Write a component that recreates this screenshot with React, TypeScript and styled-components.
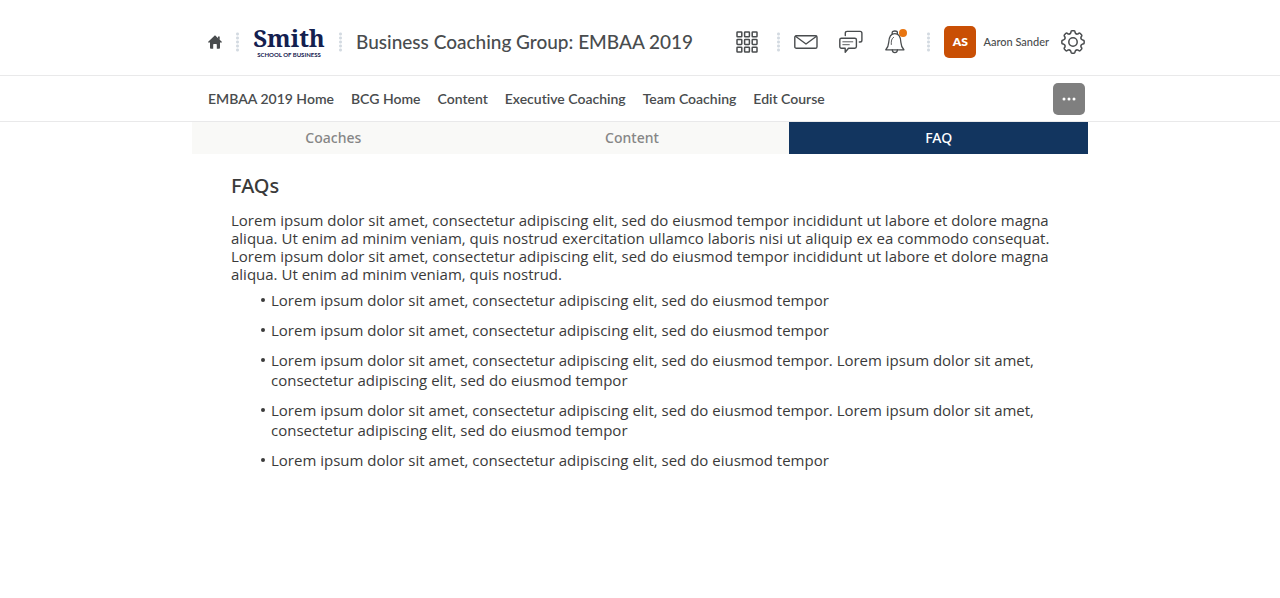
import React from 'react';
import styled, { createGlobalStyle } from 'styled-components';

const Global = createGlobalStyle`
  *, *::before, *::after { box-sizing: border-box; }
  body { margin: 0; background: #fff; color: #3a3a3a; font-family: 'Open Sans', sans-serif; }
  h1, h2, p, ul { margin: 0; padding: 0; }
  button { font: inherit; border: 0; padding: 0; background: none; color: inherit; cursor: pointer; }
  a { color: inherit; text-decoration: none; }
`;

const Band = styled.div`
  border-bottom: 1px solid #e9e9ea;
`;

const Inner = styled.div<{ $height: number; $top: number }>`
  width: 70%;
  min-height: ${(p) => p.$height}px;
  margin: 0 auto;
  padding: ${(p) => p.$top}px 3px 0 16px;
  display: flex;
  align-items: center;
  font-family: Lato, sans-serif;
  color: #494c4e;
`;

const HomeLink = styled.a`
  display: flex;
`;

const Divider = styled.span<{ $before?: number }>`
  width: 3px;
  height: 20px;
  flex: none;
  margin: 0 14px 0 ${(p) => p.$before ?? 14}px;
  background: radial-gradient(circle, #d3dae1 1px, transparent 2px) 0 0 / 3px 4px;
`;

const Logo = styled.a`
  display: flex;
  flex-direction: column;
  align-items: center;
  width: 72px;
  color: #14204f;
`;

const LogoName = styled.span`
  font: 700 24px/26px 'Noto Serif', 'DejaVu Serif Condensed', serif;
`;

const LogoSub = styled.span`
  font: 700 6px/8px Lato, sans-serif;
  white-space: nowrap;
`;

const CourseTitle = styled.a`
  flex: 1;
  font-size: 19px;
  line-height: 24px;
  font-weight: 500;
  white-space: nowrap;
`;

const Tools = styled.div`
  display: flex;
  align-items: center;
`;

const IconButton = styled.button<{ $gap?: number }>`
  position: relative;
  display: flex;
  margin-left: ${(p) => p.$gap ?? 0}px;
`;

const Badge = styled.span`
  position: absolute;
  top: -1px;
  right: -2px;
  width: 8px;
  height: 8px;
  border-radius: 50%;
  background: #e87511;
`;

const UserButton = styled.button`
  display: flex;
  align-items: center;
  gap: 7px;
  margin-right: 12px;
  font-size: 11px;
  font-weight: 500;
  white-space: nowrap;
`;

const Avatar = styled.span`
  display: grid;
  place-items: center;
  width: 32px;
  height: 32px;
  border-radius: 5px;
  background: #c94f04;
  color: #fff;
  font-size: 12px;
  font-weight: 800;
`;

const NavList = styled.nav`
  display: flex;
  flex: 1;
  gap: 17px;
  font-size: 14px;
  line-height: 20px;
  font-weight: 600;
  font-variant-ligatures: none;
  white-space: nowrap;
`;

const MoreButton = styled.button`
  display: grid;
  place-items: center;
  width: 32px;
  height: 32px;
  border-radius: 5px;
  background: #7f7f7f;
`;

const Page = styled.main`
  width: 70%;
  margin: 0 auto;
`;

const Tabs = styled.div`
  display: grid;
  grid-template-columns: repeat(3, 1fr);
`;

const Tab = styled.button<{ $active?: boolean }>`
  height: 32px;
  padding-right: ${(p) => (p.$active ? 0 : 16)}px;
  background: ${(p) => (p.$active ? '#12355f' : '#f9f9f7')};
  color: ${(p) => (p.$active ? '#fff' : '#868686')};
  font-family: 'Noto Sans', sans-serif;
  font-size: 14px;
  line-height: 18px;
  font-weight: 500;
`;

const Article = styled.section`
  padding: 20px 38px 20px 39px;
`;

const Heading = styled.h2`
  font-family: 'Noto Sans', sans-serif;
  font-size: 20px;
  line-height: 24px;
  font-weight: 500;
`;

const Intro = styled.p`
  margin-top: 13px;
  font-size: 15px;
  line-height: 18px;
`;

const List = styled.ul`
  display: grid;
  gap: 10px;
  margin-top: 7px;
  padding: 0 10px 0 40px;
  list-style: none;
  font-size: 15px;
  line-height: 20px;
`;

const Item = styled.li`
  position: relative;
  &::before {
    content: '';
    position: absolute;
    left: -10px;
    top: 8px;
    width: 4px;
    height: 4px;
    border-radius: 50%;
    background: currentColor;
  }
`;

const stroke = { fill: 'none', stroke: '#494c4e', strokeLinejoin: 'round', strokeLinecap: 'round' } as const;

const HomeIcon = () => (
  <svg width="14" height="14" viewBox="0 0 14 14" fill="#494c4e">
    <path d="M7 .3 13.8 6.8c.3.4.1.8-.4.8H12v5.2c0 .6-.3.9-.9.9H8.8V9.6c0-.5-.2-.7-.7-.7H5.9c-.5 0-.7.2-.7.7v4.1H2.9c-.6 0-.9-.3-.9-.9V7.6H.6c-.5 0-.7-.4-.4-.8z" />
    <path d="M10 1.500h1.700v3.500L10 3.500z" />
  </svg>
);

const GridIcon = () => (
  <svg width="22" height="22" viewBox="0 0 22 22" {...stroke} strokeWidth="1.500">
    {[1, 8.6, 16.2].map((y) =>
      [1, 8.6, 16.2].map((x) => <rect key={`${x}-${y}`} x={x} y={y} width="4.8" height="4.8" rx=".6" />),
    )}
  </svg>
);

const MailIcon = () => (
  <svg width="24" height="14" viewBox="0 0 24 14" {...stroke} strokeWidth="1.400">
    <rect x=".8" y=".7" width="22.2" height="12.6" rx="1.6" />
    <path d="M1.500 1.300 12 9l10.500-7.700" />
  </svg>
);

const ChatIcon = () => (
  <svg width="24" height="24" viewBox="0 0 24 24" {...stroke} strokeWidth="1.400">
    <path d="M6.300 5.500V3.200c0-1.200.6-1.800 1.800-1.800h13c1.200 0 1.800.6 1.800 1.800v7c0 1.200-.6 1.800-1.800 1.800h-.8" />
    <path d="M2.400 8.200h13.400c1 0 1.600.6 1.600 1.600v6.800c0 1-.6 1.600-1.600 1.600H9.500l-3.300 4v-4H2.400c-1 0-1.600-.6-1.600-1.600V9.800c0-1 .6-1.600 1.600-1.600z" />
    <path d="M3.800 11.800h10M3.800 14.700h6.500" strokeWidth=".9" />
  </svg>
);

const BellIcon = () => (
  <svg width="20" height="24" viewBox="0 0 20 24" {...stroke} strokeWidth="1.300">
    <path d="M.8 19.800c1.800-2 2.700-4 2.900-7.300C4 7.200 5.300 3.700 9.800 3.700s5.900 3.500 6.100 8.800c.2 3.300 1.100 5.300 3 7.300z" />
    <path d="M7.200 4V2.500c0-2 5.200-2 5.200 0V4M7.300 20c.3 3.500 4.800 3.500 5.100 0" />
    <path d="M6.300 14.500c-.2-3.500.2-6 2.300-7.200" strokeWidth=".9" />
  </svg>
);

const gearPath = (() => {
  const pts: string[] = [];
  for (let i = 0; i < 8; i++) {
    const a = (i * Math.PI) / 4;
    const p = (r: number, d: number) =>
      `${(12 + r * Math.sin(a + d)).toFixed(2)} ${(12 - r * Math.cos(a + d)).toFixed(2)}`;
    pts.push(
      `${i ? 'L' : 'M'}${p(9.6, -0.22)}Q${p(11.2, -0.2)} ${p(11.2, -0.1)}L${p(11.2, 0.1)}Q${p(11.2, 0.2)} ${p(9.6, 0.22)}Q${p(7.9, 0.392)} ${p(9.6, 0.565)}`,
    );
  }
  return `${pts.join('')}Z`;
})();

const GearIcon = () => (
  <svg width="24" height="24" viewBox="0 0 24 24" {...stroke} strokeWidth="1.500">
    <path d={gearPath} />
    <circle cx="12" cy="12" r="4.2" />
  </svg>
);

const DotsIcon = () => (
  <svg width="14" height="4" viewBox="0 0 14 4" fill="#fff">
    {[2, 7, 12].map((x) => (
      <circle key={x} cx={x} cy="2" r="1.5" />
    ))}
  </svg>
);

const links = ['EMBAA 2019 Home', 'BCG Home', 'Content', 'Executive Coaching', 'Team Coaching', 'Edit Course'];
const short = 'Lorem ipsum dolor sit amet, consectetur adipiscing elit, sed do eiusmod tempor';
const long = `${short}. Lorem ipsum dolor sit amet, consectetur adipiscing elit, sed do eiusmod tempor`;
const items = [short, short, long, long, short];

export default function App() {
  return (
    <>
      <Global />
      <header>
        <Band>
          <Inner $height={75} $top={8}>
            <HomeLink href="#" aria-label="Home"><HomeIcon /></HomeLink>
            <Divider />
            <Logo href="#">
              <LogoName>Smith</LogoName>
              <LogoSub>SCHOOL OF BUSINESS</LogoSub>
            </Logo>
            <Divider />
            <CourseTitle href="#">Business Coaching Group: EMBAA 2019</CourseTitle>
            <Tools>
              <IconButton aria-label="Courses"><GridIcon /></IconButton>
              <Divider $before={19} />
              <IconButton aria-label="Messages"><MailIcon /></IconButton>
              <IconButton aria-label="Chat" $gap={21}><ChatIcon /></IconButton>
              <IconButton aria-label="Notifications" $gap={22}><BellIcon /><Badge /></IconButton>
              <Divider $before={22} />
              <UserButton><Avatar>AS</Avatar>Aaron Sander</UserButton>
              <IconButton aria-label="Settings"><GearIcon /></IconButton>
            </Tools>
          </Inner>
        </Band>
        <Band>
          <Inner $height={45} $top={0}>
            <NavList>{links.map((l) => <a href="#" key={l}>{l}</a>)}</NavList>
            <MoreButton aria-label="More"><DotsIcon /></MoreButton>
          </Inner>
        </Band>
      </header>
      <Page>
        <Tabs>
          <Tab>Coaches</Tab>
          <Tab>Content</Tab>
          <Tab $active>FAQ</Tab>
        </Tabs>
        <Article>
          <Heading>FAQs</Heading>
          <Intro>
            Lorem ipsum dolor sit amet, consectetur adipiscing elit, sed do eiusmod tempor incididunt ut labore et dolore
            magna aliqua. Ut enim ad minim veniam, quis nostrud exercitation ullamco laboris nisi ut aliquip ex ea commodo
            consequat. Lorem ipsum dolor sit amet, consectetur adipiscing elit, sed do eiusmod tempor incididunt ut labore
            et dolore magna aliqua. Ut enim ad minim veniam, quis nostrud.
          </Intro>
          <List>{items.map((t, i) => <Item key={i}>{t}</Item>)}</List>
        </Article>
      </Page>
    </>
  );
}
